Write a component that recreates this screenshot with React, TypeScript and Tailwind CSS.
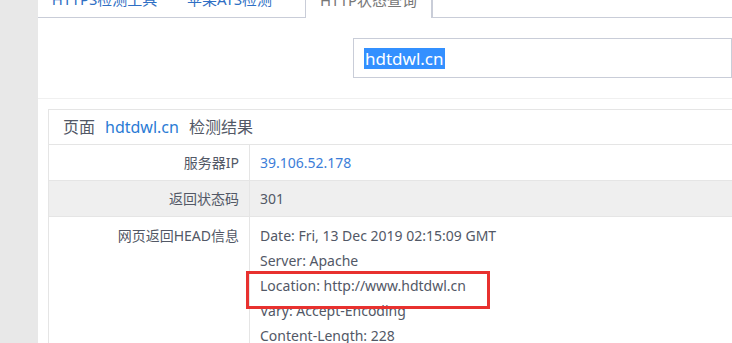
const FONT = "font-['Noto_Sans','Noto_Sans_CJK_SC',sans-serif]";

const TABS = [
  { label: 'HTTPS检测工具', active: false },
  { label: '苹果ATS检测', active: false },
  { label: 'HTTP状态查询', active: true },
];

const HEAD_LINES = [
  'Date: Fri, 13 Dec 2019 02:15:09 GMT',
  'Server: Apache',
  'Location: http://www.hdtdwl.cn',
  'Vary: Accept-Encoding',
  'Content-Length: 228',
];

export default function App() {
  return (
    <div className={`${FONT} flex h-[343px] w-[732px] overflow-hidden bg-[#e8e8e8]`}>
      <div className="w-[38px] shrink-0" />
      <div className="flex-1 bg-white">
        {/* tabs, scrolled half out of view */}
        <div className="-mt-[18px] flex h-[36px] border-b border-[#c9cdd8]">
          <div className="w-[4px]" />
          {TABS.map((t) =>
            t.active ? (
              <div
                key={t.label}
                className="-mb-px ml-[13px] flex h-[36px] w-[127px] items-center justify-center border-x border-[#c9cdd8] bg-white text-[15px] text-[#777]"
              >
                {t.label}
              </div>
            ) : (
              <div
                key={t.label}
                className="flex h-[35px] w-[125px] items-center justify-center text-[15px] text-[#2f6fc4]"
              >
                {t.label}
              </div>
            ),
          )}
          <div className="border-l border-[#c9cdd8]" />
        </div>

        {/* search box */}
        <div className="flex h-[80px] items-start pl-[315px] pt-[20px]">
          <div className="flex h-[40px] flex-1 items-center border border-[#c9cdd8] pl-[10px]">
            <span className="bg-[#3390ff] px-px text-[17px] leading-[21px] text-white">hdtdwl.cn</span>
          </div>
        </div>

        <div className="h-[11px] border-t border-[#f0f0f0]" />

        {/* result panel */}
        <div className="ml-[10px] border border-r-0 border-[#e5e5e5] text-[14px] text-[#525866]">
          <div className="flex h-[35px] items-center gap-[10px] border-b border-[#e5e5e5] pl-[14px] text-[16px]">
            <span>页面</span>
            <span className="text-[#2b7bd5]">hdtdwl.cn</span>
            <span>检测结果</span>
          </div>

          <div className="flex h-[36px] border-b border-[#e5e5e5]">
            <div className="flex w-[201px] shrink-0 items-center justify-end border-r border-[#e5e5e5] pr-[10px]">服务器IP</div>
            <div className="flex items-center pl-[10px] text-[#3b7dd8]">39.106.52.178</div>
          </div>

          <div className="flex h-[36px] border-b border-[#e5e5e5] bg-[#efefef]">
            <div className="flex w-[201px] shrink-0 items-center justify-end border-r border-[#e5e5e5] pr-[10px]">返回状态码</div>
            <div className="flex items-center pl-[10px]">301</div>
          </div>

          <div className="flex">
            <div className="w-[201px] shrink-0 border-r border-[#e5e5e5] pr-[10px] pt-[6px] text-right leading-[25px]">
              网页返回HEAD信息
            </div>
            <div className="relative pl-[10px] pt-[6px] leading-[25px]">
              {HEAD_LINES.map((l) => (
                <div key={l}>{l}</div>
              ))}
              {/* annotation box */}
              <div className="absolute left-[-4px] top-[54px] h-[38px] w-[244px] border-[3px] border-[#e8312f]" />
            </div>
          </div>
        </div>
      </div>
    </div>
  );
}
